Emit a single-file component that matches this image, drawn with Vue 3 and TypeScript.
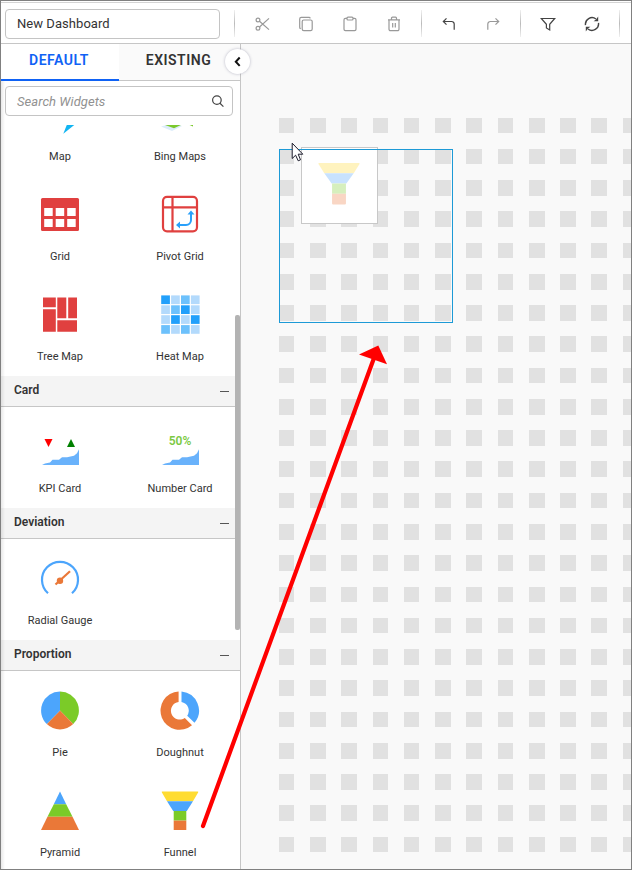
<script setup lang="ts">
interface Widget {
  id: string
  label: string
}
interface Section {
  title: string
  widgets: Widget[]
}
interface Square {
  x: number
  y: number
  w: number
  h: number
}

const sections: Section[] = [
  {
    title: '',
    widgets: [
      { id: 'map', label: 'Map' },
      { id: 'bing', label: 'Bing Maps' },
      { id: 'grid', label: 'Grid' },
      { id: 'pivot', label: 'Pivot Grid' },
      { id: 'tree', label: 'Tree Map' },
      { id: 'heat', label: 'Heat Map' },
    ],
  },
  {
    title: 'Card',
    widgets: [
      { id: 'kpi', label: 'KPI Card' },
      { id: 'number', label: 'Number Card' },
    ],
  },
  { title: 'Deviation', widgets: [{ id: 'gauge', label: 'Radial Gauge' }] },
  {
    title: 'Proportion',
    widgets: [
      { id: 'pie', label: 'Pie' },
      { id: 'doughnut', label: 'Doughnut' },
      { id: 'pyramid', label: 'Pyramid' },
      { id: 'funnel', label: 'Funnel' },
    ],
  },
]

// Snap points of the layout surface, rounded to whole pixels.
const pitch = 31.266
const side = 15.63
const squares: Square[] = []
for (let r = 0; r < 24; r++) {
  for (let c = 0; c < 12; c++) {
    const left = 37.82 + c * (pitch - 0.006)
    const top = 73.57 + r * pitch
    const x = Math.round(left)
    const y = Math.round(top)
    squares.push({ x, y, w: Math.round(left + side) - x, h: Math.round(top + side) - y })
  }
}

const shades = ['#22a0fb', '#b3dafc', '#6dc1fc']
const heat = [
  [0, 1, 2, 1],
  [1, 2, 0, 1],
  [1, 0, 1, 0],
  [2, 1, 2, 1],
]
</script>

<template>
  <div class="app">
    <header class="toolbar">
      <div class="name">New Dashboard</div>
      <i class="sep first"></i>
      <div class="tools edit">
        <svg viewBox="0 0 16 16" class="dim"><circle cx="4" cy="4" r="1.9" /><circle cx="4" cy="12.200" r="1.9" /><path d="M5.500 5.200 15 13.600M5.500 11 15 2.400" /></svg>
        <svg viewBox="0 0 16 16" class="dim"><rect x="4.200" y="4" width="10" height="10.700" rx="1.600" /><path d="M2.800 12.600a1.300 1.300 0 0 1-1.100-1.400V3a1.600 1.600 0 0 1 1.600-1.600h7.600a1.400 1.400 0 0 1 1.400 1" /></svg>
        <svg viewBox="0 0 16 16" class="dim"><path d="M5 2.400H3.400A1.400 1.400 0 0 0 2 3.800V13.300A1.400 1.400 0 0 0 3.400 14.700h9.200a1.400 1.400 0 0 0 1.400-1.400V3.800a1.400 1.400 0 0 0-1.400-1.400H11" /><rect x="5" y="1.200" width="6" height="2.800" rx="1" /></svg>
        <svg viewBox="0 0 16 16" class="dim"><path d="M2 3.800h12M5.500 3.600V2.200a1 1 0 0 1 1-1h3a1 1 0 0 1 1 1v1.400M3 4v9.300A1.400 1.400 0 0 0 4.400 14.700h7.200a1.400 1.400 0 0 0 1.400-1.400V4M6.700 7v4.500M9.300 7v4.500" /></svg>
      </div>
      <i class="sep"></i>
      <div class="tools history">
        <svg viewBox="0 0 16 16"><path d="M5.500 2.300 2.300 5.500l3.200 3.200M2.500 5.500h8.100a2.600 2.600 0 0 1 2.600 2.600V13.800" /></svg>
        <svg viewBox="0 0 16 16" class="dim"><path d="M10.500 2.300l3.200 3.200-3.200 3.200M13.500 5.500H5.400A2.600 2.600 0 0 0 2.800 8.100V13.800" /></svg>
      </div>
      <i class="sep"></i>
      <div class="tools view">
        <svg viewBox="0 0 16 16"><path d="M1.300 2.500h13.400L9.700 8.300V14L6.400 12V8.300Z" /></svg>
        <svg viewBox="0 0 16 16"><path d="M1.500 9.200A6.600 6.600 0 0 1 12 3M14.500 6.800A6.600 6.600 0 0 1 4 13" stroke-width="1.400" /><path d="M14.200 .6v4.600H9.600L12 3.600ZM1.800 15.400v-4.600H6.400L4 12.400Z" class="solid" /></svg>
      </div>
      <i class="sep"></i>
    </header>

    <main class="body">
      <aside class="panel">
        <nav class="tabs">
          <div class="tab active">DEFAULT</div>
          <div class="tab">EXISTING</div>
        </nav>
        <div class="search">
          <span>Search Widgets</span>
          <svg viewBox="0 0 14 14"><circle cx="5.900" cy="6.100" r="4.300" /><path d="m9 9.300 3.400 3.300" /></svg>
        </div>
        <div class="list">
          <section v-for="s in sections" :key="s.title" class="section">
            <div v-if="s.title" class="heading"><span>{{ s.title }}</span><i class="minus"></i></div>
            <div class="items">
              <div v-for="w in s.widgets" :key="w.id" class="item">
                <svg v-if="w.id === 'map'" class="icon" viewBox="0 0 40 40"><path d="M38 27 23.300 38.700 28 27Z" fill="#12b5f2" /></svg>
                <svg v-else-if="w.id === 'bing'" class="icon" viewBox="0 0 40 40"><path d="M1 31.500 12 36 22 31 14 28Z" fill="#dcecfa" /><path d="M1 28.500 14 33.300 25 28Z" fill="#7bc92c" /><path d="M25 28 33 31.500V27Z" fill="#7bc92c" /></svg>
                <svg v-else-if="w.id === 'grid'" class="icon" viewBox="0 0 40 40">
                  <rect x="1" y="3" width="38" height="33" rx="1.500" fill="#e0403f" />
                  <g fill="#fff"><template v-for="r in 2" :key="r"><rect v-for="c in 3" :key="c" :x="c * 11.500 - 7.300" :y="r * 11 + 2" width="8.500" height="8" /></template></g>
                </svg>
                <svg v-else-if="w.id === 'pivot'" class="icon" viewBox="0 0 40 40">
                  <g fill="none" stroke="#e0403f" stroke-width="2.200"><rect x="3" y="1.900" width="34" height="34.400" rx="4" /><path d="M12.500 2v34M3 12.300h34" /></g>
                  <path d="M18 30h8a5 5 0 0 0 5-5v-7" fill="none" stroke="#2aa0fa" stroke-width="2" /><path d="m16 30 4-3.500v7ZM31 15.500l-3.500 4h7Z" fill="#2aa0fa" />
                </svg>
                <svg v-else-if="w.id === 'tree'" class="icon" viewBox="0 0 40 40" fill="#e0403f"><path d="M3 2.500h12.800v9.700H3ZM3 14.300h12.800v22.400H3ZM17.300 2.500h9v20.700h-9ZM28.200 2.500H37v20.700h-8.800ZM17.300 25.200H37v11.500H17.300Z" /></svg>
                <svg v-else-if="w.id === 'heat'" class="icon" viewBox="0 0 40 40">
                  <template v-for="(row, r) in heat" :key="r"><rect v-for="(v, c) in row" :key="c" :x="1.200 + c * 9.900" :y="0.400 + r * 9.900" width="8.700" height="8.700" :fill="shades[v]" /></template>
                </svg>
                <svg v-else-if="w.id === 'kpi'" class="icon" viewBox="0 0 40 40"><path d="M4.500 12h8l-4 8Z" fill="red" /><path d="M27 20h8l-4-8Z" fill="green" /><path d="M2 38l3-1.500 5-1 2.500-2.800H19l3-2.500h5l7-1.500 3-2.500 2-4V38Z" fill="#69b2fb" /></svg>
                <svg v-else-if="w.id === 'number'" class="icon" viewBox="0 0 40 40"><text x="20" y="18" text-anchor="middle" class="percent">50%</text><path d="M2 38l3-1.500 5-1 2.500-2.800H19l3-2.500h5l7-1.500 3-2.500 2-4V38Z" fill="#69b2fb" /></svg>
                <svg v-else-if="w.id === 'gauge'" class="icon" viewBox="0 0 40 40"><path d="M8 34.200A18 18 0 1 1 32 34.200" fill="none" stroke="#4ca5fc" stroke-width="2.200" /><path d="M15.500 25.500 30 12.200" stroke="#ea7838" stroke-width="2.200" /><circle cx="20" cy="21.700" r="3.200" fill="#ea7838" /></svg>
                <svg v-else-if="w.id === 'pie'" class="icon" viewBox="0 0 40 40"><path d="M20 19.500V.400A19.100 19.100 0 0 1 33.200 33.100Z" fill="#7bcb28" /><path d="M20 19.500 33.200 33.100a19.100 19.100 0 0 1-26.400 0Z" fill="#ea7838" /><path d="M20 19.500 6.800 33.100A19.100 19.100 0 0 1 20 .400Z" fill="#4ca5fc" /></svg>
                <svg v-else-if="w.id === 'doughnut'" class="icon" viewBox="0 0 40 40"><path d="M18.600.400v10.500a8.900 8.900 0 1 0 6.200 16.200l7.200 7.200A19.200 19.200 0 1 1 18.600.400Z" fill="#ea7838" /><path d="M21.500.400A19.200 19.200 0 0 1 34.500 31.800L27.200 24.700A8.900 8.900 0 0 0 21.500 10.900Z" fill="#4ca5fc" /></svg>
                <svg v-else-if="w.id === 'pyramid'" class="icon" viewBox="0 0 40 40"><path d="M20 .600 26.200 13.200H13.800Z" fill="#4ca5fc" /><path d="M13.800 13.200h12.400l6.300 12.500h-25Z" fill="#7bcb28" /><path d="M7.500 25.700h25L39 39H1Z" fill="#ea7838" /></svg>
                <svg v-else class="icon" viewBox="0 0 40 40"><path d="M2.300.500h35.400q1 0 .4.900L33 10.200H7L1.900 1.400Q1.300.500 2.300.500Z" fill="#ffdc32" /><path d="M7 10.200h26L26.800 20H13.200Z" fill="#4ca5fc" /><path d="M13.700 20h12.600v9.600H13.700Z" fill="#7bcb28" /><path d="M13.700 29.600h12.600V39H13.700Z" fill="#ea7838" /></svg>
                <span>{{ w.label }}</span>
              </div>
            </div>
          </section>
        </div>
        <div class="thumb"></div>
        <div class="shade"></div>
        <button class="collapse"><svg viewBox="0 0 10 12"><path d="M6.700 1.500 2.800 5.700l3.900 4.200" /></svg></button>
      </aside>

      <div class="canvas">
        <svg class="squares" width="390" height="825"><rect v-for="(q, i) in squares" :key="i" :x="q.x" :y="q.y" :width="q.w" :height="q.h" fill="#e1e1e1" /></svg>
        <div class="ghost">
          <svg viewBox="0 0 40 40"><path d="M1 .500h38q1 0 .5.900L34 10.200H6L.500 1.400Q0 .500 1 .500Z" fill="#fff3bf" /><path d="M6 10.200h28L27 20H13Z" fill="#c8e2fe" /><path d="M13.400 20h13.200v9.800H13.400Z" fill="#d6efbd" /><path d="M13.400 29.800h13.200v9.300q0 .900-.9.900H14.300q-.9 0-.9-.9Z" fill="#f9d6c4" /></svg>
        </div>
        <div class="drop"></div>
        <svg class="cursor" viewBox="0 0 14 20"><path d="M1.200 1.200V16.500L4.600 13.200 7.200 18.800 9.500 17.800 7.200 12.200H11.800Z" fill="#fff" stroke="#1a1a2a" /></svg>
      </div>
    </main>

    <svg class="arrow" width="632" height="870"><path d="M203 826 374 358" stroke="#f00" stroke-width="4.200" stroke-linecap="round" /><path d="M378.300 345.500 387 364.300 359 354.500Z" fill="#f00" /></svg>
  </div>
</template>

<style>
body {
  margin: 0;
  overflow: hidden;
}
</style>

<style scoped>
.app {
  position: relative;
  box-sizing: border-box;
  width: 632px;
  height: 870px;
  border: 1px solid #808080;
  background: #fff;
  color: #333;
  font-family: Roboto, "Liberation Sans", sans-serif;
  display: flex;
  flex-direction: column;
  overflow: hidden;
}
.toolbar {
  box-sizing: border-box;
  height: 42px;
  margin-top: 1px;
  border-top: 1px solid #d4d4d4;
  border-bottom: 1px solid #c6c6c6;
  flex: none;
  display: flex;
  align-items: center;
  padding: 1px 0 0 4px;
}
.name {
  box-sizing: border-box;
  width: 215px;
  height: 30px;
  border: 1px solid #c4c4c4;
  border-radius: 4px;
  padding-left: 11px;
  font-size: 13px;
  line-height: 28px;
  letter-spacing: 0.05px;
}
.sep {
  width: 1px;
  height: 27px;
  background: linear-gradient(#f0f0f0, #bbb 50%, #f0f0f0);
}
.sep.first {
  margin-left: 14px;
}
.tools {
  display: flex;
}
.tools svg {
  width: 16px;
  height: 16px;
  fill: none;
  stroke: #444;
  stroke-width: 1.2;
}
.tools svg.dim {
  stroke: #999;
}
.tools .solid {
  fill: #444;
  stroke: none;
}
.edit {
  gap: 28px;
  margin: 0 19px;
}
.history {
  gap: 28px;
  margin: 0 19px;
}
.view {
  gap: 28px;
  margin: 0 19px;
}
.history + .sep {
  margin-left: 4px;
  margin-right: -4px;
}
.history + .sep {
  margin: 0;
}
.body {
  flex: 1;
  display: flex;
  min-height: 0;
}
.panel {
  position: relative;
  z-index: 1;
  width: 239px;
  flex: none;
  border-right: 1px solid #c6c6c6;
  display: flex;
  flex-direction: column;
}
.tabs {
  display: flex;
  height: 37px;
  flex: none;
}
.tab {
  box-sizing: border-box;
  width: 121px;
  height: 37px;
  padding-right: 2px;
  border-bottom: 1px solid #c6c6c6;
  background: #fafafa;
  font-size: 14px;
  font-weight: 600;
  letter-spacing: 0.5px;
  line-height: 32px;
  text-align: center;
}
.tab.active {
  width: 118px;
  border-bottom: 2px solid #0f62f5;
  background: #fff;
  color: #0f62f5;
}
.search {
  box-sizing: border-box;
  width: 228px;
  height: 30px;
  margin: 5px 0 0 4px;
  padding: 0 7px 0 11px;
  border: 1px solid #c4c4c4;
  border-radius: 4px;
  display: flex;
  flex: none;
  align-items: center;
  justify-content: space-between;
  color: #919191;
  font-size: 13px;
  font-style: italic;
  letter-spacing: 0.05px;
}
.search svg {
  width: 14px;
  height: 14px;
  fill: none;
  stroke: #444;
  stroke-width: 1.2;
}
.list {
  flex: 1;
  min-height: 0;
  margin-top: 9px;
  overflow: hidden;
}
.section:first-child {
  margin-top: -50px;
}
.section {
  padding-bottom: 1px;
}
.heading {
  box-sizing: border-box;
  height: 31px;
  background: #f4f4f4;
  border-bottom: 1px solid #c6c6c6;
  display: flex;
  justify-content: space-between;
  padding: 0 11px 0 13px;
  font-size: 12px;
  font-weight: 600;
  line-height: 28px;
}
.minus {
  width: 9px;
  height: 1px;
  margin-top: 15px;
  background: #555;
}
.items {
  display: grid;
  grid-template-columns: 118px 122px;
  grid-auto-rows: 100px;
}
.item {
  box-sizing: border-box;
  padding-top: 20px;
  display: flex;
  flex-direction: column;
  align-items: center;
  gap: 15px;
  font-size: 11px;
  line-height: 14px;
  letter-spacing: 0;
}
.icon {
  width: 40px;
  height: 40px;
  flex: none;
}
.percent {
  font-size: 12px;
  font-weight: 600;
  fill: #7bc943;
}
.thumb {
  position: absolute;
  left: 234px;
  top: 271px;
  width: 5px;
  height: 315px;
  border-radius: 2px;
  background: #b3b3b3;
}
.shade {
  position: absolute;
  left: 0;
  top: 37px;
  bottom: 0;
  width: 4px;
  background: linear-gradient(90deg, rgba(0, 0, 0, 0.09), rgba(0, 0, 0, 0));
}
.collapse {
  position: absolute;
  left: 224px;
  top: 5px;
  width: 25px;
  height: 25px;
  padding: 0;
  border: 0;
  border-radius: 50%;
  background: #fff;
  box-shadow: 0 0 3px rgba(60, 60, 100, 0.35);
  display: flex;
  align-items: center;
  justify-content: center;
}
.collapse svg {
  width: 10px;
  height: 12px;
  fill: none;
  stroke: #111;
  stroke-width: 2;
}
.canvas {
  position: relative;
  flex: 1;
  background: #f9f9f9;
}
.squares {
  display: block;
}
.ghost {
  position: absolute;
  box-sizing: border-box;
  left: 60px;
  top: 103px;
  width: 77px;
  height: 77px;
  border: 1px solid #c8c8c8;
  background: #fff;
}
.ghost svg {
  display: block;
  width: 42px;
  height: 43px;
  margin: 14px 0 0 16px;
}
.drop {
  position: absolute;
  box-sizing: border-box;
  left: 38px;
  top: 105px;
  width: 174px;
  height: 174px;
  border: 1px solid #1d9ad6;
}
.cursor {
  position: absolute;
  left: 50px;
  top: 98px;
  width: 14px;
  height: 20px;
}
.arrow {
  position: absolute;
  left: -1px;
  top: -1px;
  z-index: 2;
  fill: none;
  pointer-events: none;
}
</style>
